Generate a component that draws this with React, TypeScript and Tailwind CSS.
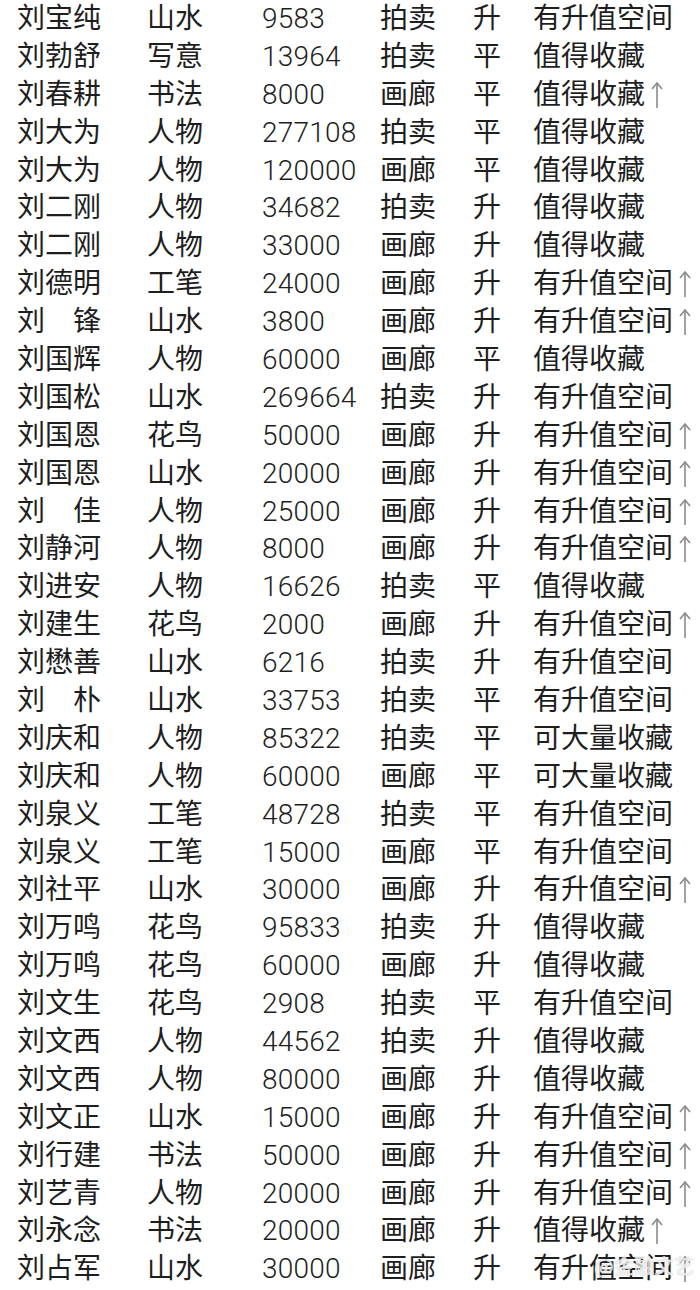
import React from "react";

type Row = [string, string, string, string, string, string, boolean];

const rows: Row[] = [
  ["刘宝纯", "山水", "9583", "拍卖", "升", "有升值空间", false],
  ["刘勃舒", "写意", "13964", "拍卖", "平", "值得收藏", false],
  ["刘春耕", "书法", "8000", "画廊", "平", "值得收藏", true],
  ["刘大为", "人物", "277108", "拍卖", "平", "值得收藏", false],
  ["刘大为", "人物", "120000", "画廊", "平", "值得收藏", false],
  ["刘二刚", "人物", "34682", "拍卖", "升", "值得收藏", false],
  ["刘二刚", "人物", "33000", "画廊", "升", "值得收藏", false],
  ["刘德明", "工笔", "24000", "画廊", "升", "有升值空间", true],
  ["刘锋", "山水", "3800", "画廊", "升", "有升值空间", true],
  ["刘国辉", "人物", "60000", "画廊", "平", "值得收藏", false],
  ["刘国松", "山水", "269664", "拍卖", "升", "有升值空间", false],
  ["刘国恩", "花鸟", "50000", "画廊", "升", "有升值空间", true],
  ["刘国恩", "山水", "20000", "画廊", "升", "有升值空间", true],
  ["刘佳", "人物", "25000", "画廊", "升", "有升值空间", true],
  ["刘静河", "人物", "8000", "画廊", "升", "有升值空间", true],
  ["刘进安", "人物", "16626", "拍卖", "平", "值得收藏", false],
  ["刘建生", "花鸟", "2000", "画廊", "升", "有升值空间", true],
  ["刘懋善", "山水", "6216", "拍卖", "升", "有升值空间", false],
  ["刘朴", "山水", "33753", "拍卖", "平", "有升值空间", false],
  ["刘庆和", "人物", "85322", "拍卖", "平", "可大量收藏", false],
  ["刘庆和", "人物", "60000", "画廊", "平", "可大量收藏", false],
  ["刘泉义", "工笔", "48728", "拍卖", "平", "有升值空间", false],
  ["刘泉义", "工笔", "15000", "画廊", "平", "有升值空间", false],
  ["刘社平", "山水", "30000", "画廊", "升", "有升值空间", true],
  ["刘万鸣", "花鸟", "95833", "拍卖", "升", "值得收藏", false],
  ["刘万鸣", "花鸟", "60000", "画廊", "升", "值得收藏", false],
  ["刘文生", "花鸟", "2908", "拍卖", "平", "有升值空间", false],
  ["刘文西", "人物", "44562", "拍卖", "升", "值得收藏", false],
  ["刘文西", "人物", "80000", "画廊", "升", "值得收藏", false],
  ["刘文正", "山水", "15000", "画廊", "升", "有升值空间", true],
  ["刘行建", "书法", "50000", "画廊", "升", "有升值空间", true],
  ["刘艺青", "人物", "20000", "画廊", "升", "有升值空间", true],
  ["刘永念", "书法", "20000", "画廊", "升", "值得收藏", true],
  ["刘占军", "山水", "30000", "画廊", "升", "有升值空间", true],
];

function Arrow() {
  return (
    <svg width="14" height="28" viewBox="0 0 14 28" className="ml-[5px] shrink-0">
      <line x1="7" y1="2" x2="7" y2="27" stroke="#8a8a8a" strokeWidth="1.6" />
      <polyline points="2,8 7,2 12,8" fill="none" stroke="#8a8a8a" strokeWidth="1.6" />
    </svg>
  );
}

export default function App() {
  return (
    <div
      className="relative w-[700px] h-[1290px] bg-white overflow-hidden text-[#1e1e1e] text-[28px] leading-none"
      style={{ fontFamily: '"Liberation Sans", "Noto Sans CJK SC", sans-serif' }}
    >
      <div className="flex flex-col">
        {rows.map((r, i) => {
          const twoChar = r[0].length === 2;
          return (
            <div key={i} className="flex items-center h-[37.9px] pl-[17px]">
              <div className="w-[130px] shrink-0">
                {twoChar ? (
                  <div className="flex justify-between w-[84px]">
                    <span>{r[0][0]}</span>
                    <span>{r[0][1]}</span>
                  </div>
                ) : (
                  <span>{r[0]}</span>
                )}
              </div>
              <div className="w-[115px] shrink-0">{r[1]}</div>
              <div
                className="w-[118px] shrink-0 font-light tracking-[0.2px]"
                style={{ fontFamily: 'Roboto, "Liberation Sans", sans-serif' }}
              >
                {r[2]}
              </div>
              <div className="w-[93px] shrink-0">{r[3]}</div>
              <div className="w-[60px] shrink-0">{r[4]}</div>
              <div className="flex items-center">
                <span>{r[5]}</span>
                {r[6] && <Arrow />}
              </div>
            </div>
          );
        })}
      </div>
      <div
        className="absolute right-[6px] bottom-[14px] text-[20px] text-white/70 font-bold"
        style={{ fontFamily: '"Noto Sans CJK SC", sans-serif', textShadow: "0 0 1px rgba(160,160,160,0.6)" }}
      >
        @金融文艺
      </div>
    </div>
  );
}
